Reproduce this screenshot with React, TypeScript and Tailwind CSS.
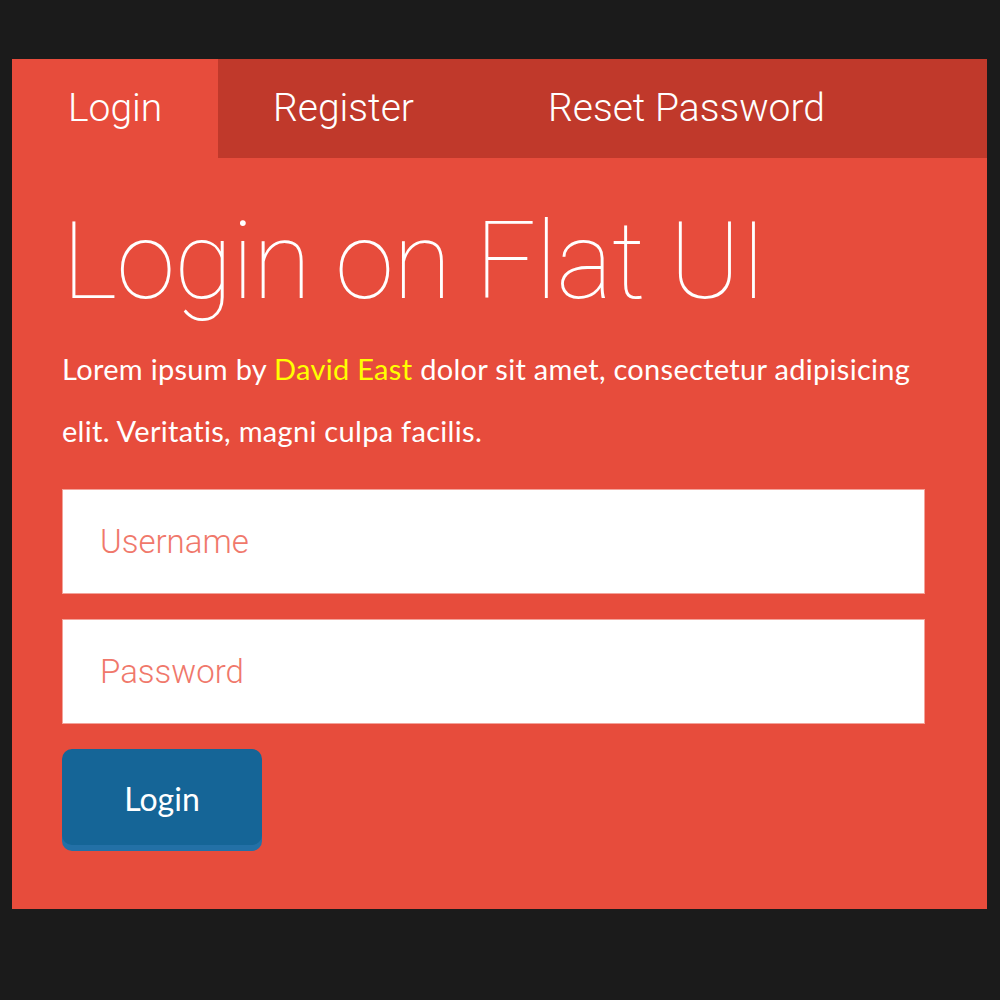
import { useState } from 'react';

const tabs = ['Login', 'Register', 'Reset Password'];

export default function App() {
  const [active, setActive] = useState(0);

  return (
    <div className="min-h-screen w-full bg-[#1b1b1b] pt-[59px] pl-[12px]" style={{ fontFamily: 'Roboto, "Liberation Sans", sans-serif' }}>
      <div className="w-[975px] h-[850px] bg-[#e74c3c] flex flex-col">
        {/* Tabs */}
        <div className="flex h-[99px] bg-[#c0392b]">
          {tabs.map((t, i) => (
            <button
              key={t}
              onClick={() => setActive(i)}
              className={`h-full text-[39px] font-light text-white ${i === 0 ? 'w-[206px] pl-[56px]' : i === 1 ? 'w-[276px] pl-[55px]' : 'pl-[54px]'} text-left ${
                active === i ? 'bg-[#e74c3c]' : 'bg-[#c0392b]'
              }`}
            >
              {t}
            </button>
          ))}
        </div>

        {/* Body */}
        <div className="px-[50px] pt-[50px]">
          <h1 className="text-[107px] font-thin text-white leading-none tracking-[-1px]">Login on Flat UI</h1>
          <p className="mt-[23px] text-[29px] tracking-[0.3px] text-white leading-[62px]" style={{ fontFamily: 'Lato, sans-serif' }}>
            Lorem ipsum by <span className="text-[#ffff00]">David East</span> dolor sit amet, consectetur adipisicing elit. Veritatis, magni culpa facilis.
          </p>

          <div className="mt-[27px] flex flex-col gap-[25px] w-[863px]">
            <input
              type="text"
              placeholder="Username"
              className="h-[105px] w-full bg-white border border-[#f3a39a] px-[37px] text-[33px] font-light text-[#c0392b] placeholder:text-[#f0786b] outline-none"
            />
            <input
              type="password"
              placeholder="Password"
              className="h-[105px] w-full bg-white border border-[#f3a39a] px-[37px] text-[33px] font-light text-[#c0392b] placeholder:text-[#f0786b] outline-none"
            />
          </div>

          <button className="mt-[25px] w-[200px] h-[96px] pt-[4px] rounded-[10px] bg-[#156597] text-white text-[32px] shadow-[0_6px_0_#2370a6]" style={{ fontFamily: 'Lato, sans-serif' }}>
            Login
          </button>
        </div>
      </div>
    </div>
  );
}
